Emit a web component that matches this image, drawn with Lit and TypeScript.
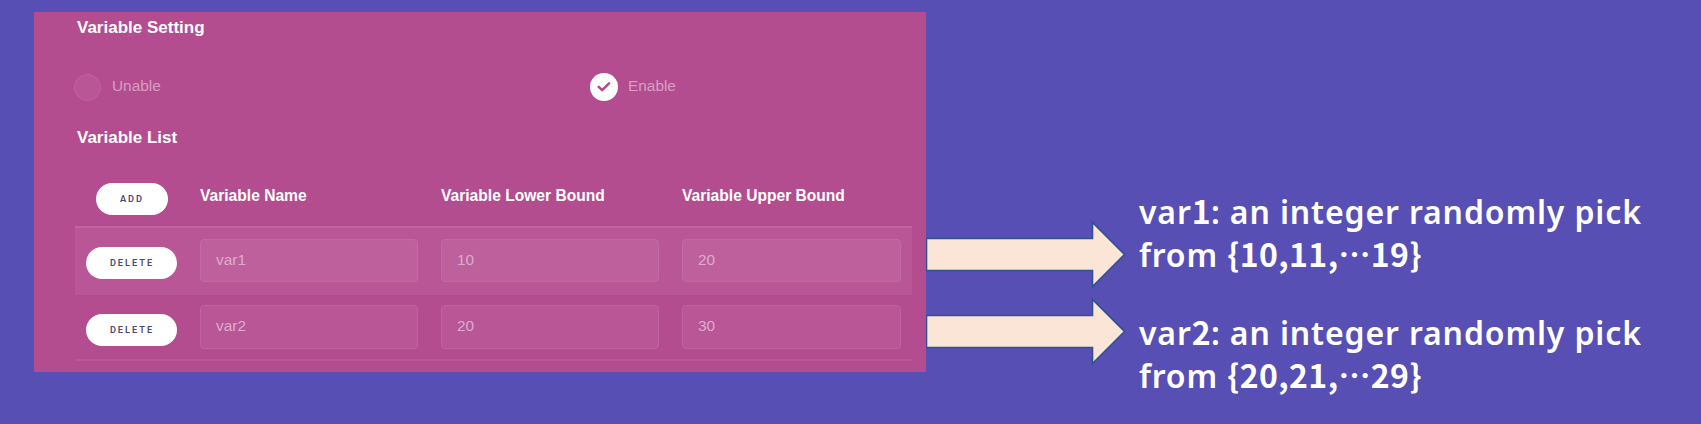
import { LitElement, html, css } from "lit";
import { customElement, property } from "lit/decorators.js";

interface Variable {
  name: string;
  lower: string;
  upper: string;
}

const VARIABLES: Variable[] = [
  { name: "var1", lower: "10", upper: "20" },
  { name: "var2", lower: "20", upper: "30" },
];

@customElement("variable-table")
class VariableTable extends LitElement {
  @property({ attribute: false }) rows: Variable[] = [];

  static styles = css`
    :host {
      display: block;
      width: 837px;
      font-family: "Liberation Sans", Arial, sans-serif;
    }
    .row {
      display: grid;
      grid-template-columns: 102px 218px 218px 219px;
      column-gap: 23px;
      box-sizing: border-box;
      height: 66px;
      padding-top: 11px;
      border-bottom: 2px solid #b95697;
    }
    .head {
      height: 61px;
      padding-top: 16px;
      border-bottom: 2px solid #bf66a2;
    }
    .odd {
      height: 67px;
      background: #b85696;
    }
    .action {
      display: flex;
      justify-content: center;
      align-items: flex-start;
      padding: 8px 0 0 11px;
    }
    .head .action {
      padding: 0 0 0 11px;
    }
    .btn {
      box-sizing: border-box;
      width: 91px;
      height: 32px;
      border: 0;
      border-radius: 16px;
      background: #fff;
      color: #51466f;
      font: 600 9.2px/30px Roboto, sans-serif;
      letter-spacing: 2px;
      padding: 0 0 1px 1px;
      text-align: center;
    }
    .add {
      width: 72px;
    }
    .title {
      color: #fff;
      font-weight: 700;
      font-size: 15.6px;
      line-height: 18px;
      padding-top: 4px;
      white-space: nowrap;
    }
    .field {
      box-sizing: border-box;
      width: 100%;
      height: 43px;
      border: 1px solid #c16ba5;
      border-radius: 4px;
      background: #bd609c;
      color: #dfabcd;
      font: 15.4px/20px "Liberation Sans", Arial, sans-serif;
      padding: 0 15px 2px;
    }
    .even .field {
      height: 44px;
      margin-top: -1px;
      background: #b85696;
      border-color: #be64a0;
    }
  `;

  render() {
    return html`
      <div class="row head">
        <div class="action"><button class="btn add">ADD</button></div>
        <div class="title">Variable Name</div>
        <div class="title">Variable Lower Bound</div>
        <div class="title">Variable Upper Bound</div>
      </div>
      ${this.rows.map(
        (v, i) => html`
          <div class="row ${i % 2 ? "even" : "odd"}">
            <div class="action"><button class="btn">DELETE</button></div>
            <div><input class="field" .value=${v.name} /></div>
            <div><input class="field" .value=${v.lower} /></div>
            <div><input class="field" .value=${v.upper} /></div>
          </div>
        `
      )}
    `;
  }
}

@customElement("block-arrow")
class BlockArrow extends LitElement {
  static styles = css`
    :host {
      display: block;
      height: 68px;
    }
    svg {
      display: block;
    }
  `;

  render() {
    return html`
      <svg width="200" height="68" viewBox="0 0 200 68">
        <path
          d="M0.5 18.5H166.5V2.5L198.5 34.5L166.5 66.5V50.5H0.5Z"
          fill="#fbe5d6"
          stroke="#2f528f"
          stroke-width="1.6"
        />
      </svg>
    `;
  }
}

@customElement("app-root")
class AppRoot extends LitElement {
  static styles = css`
    :host {
      display: flex;
      align-items: flex-start;
      box-sizing: border-box;
      width: 1701px;
      height: 424px;
      padding: 12px 0 0 34px;
      overflow: hidden;
      background: #584fb4;
      font-family: "Liberation Sans", Arial, sans-serif;
    }
    .panel {
      box-sizing: border-box;
      width: 892px;
      height: 360px;
      padding: 6px 0 0 40px;
      background: #b34d8f;
      flex: none;
    }
    .heading {
      margin: 0;
      padding-left: 3px;
      color: #fff;
      font-size: 17px;
      line-height: 20px;
      font-weight: 700;
    }
    .options {
      display: grid;
      grid-template-columns: 516px 1fr;
      align-items: center;
      height: 28px;
      margin: 35px 0 27px;
    }
    .option {
      display: flex;
      align-items: center;
      gap: 11px;
      color: #d99dc5;
      font-size: 15.4px;
      line-height: 18px;
    }
    .option span {
      padding-bottom: 2px;
    }
    .mark {
      box-sizing: border-box;
      width: 27px;
      height: 27px;
      border: 1px solid #be66a2;
      border-radius: 50%;
      background: #b85696;
    }
    .checked {
      display: grid;
      place-items: center;
      width: 28px;
      height: 28px;
      border: 0;
      background: #fff;
    }
    .checked + span {
      margin-left: -1px;
    }
    .table {
      margin: 19px 0 0 1px;
    }
    .arrows {
      display: flex;
      flex-direction: column;
      gap: 9px;
      width: 200px;
      padding-top: 208px;
      flex: none;
    }
    .notes {
      display: flex;
      flex-direction: column;
      gap: 35px;
      padding: 178px 0 0 13px;
      color: #fff;
      font: 600 32px/43px "Noto Sans", sans-serif;
      letter-spacing: 0.86px;
      white-space: nowrap;
    }
    .line {
      display: block;
      height: 43px;
    }
    .num {
      font-family: "Noto Sans CJK SC", sans-serif;
      font-weight: 700;
      line-height: 1px;
      letter-spacing: 0.4px;
    }
  `;

  render() {
    return html`
      <section class="panel">
        <h2 class="heading">Variable Setting</h2>
        <div class="options">
          <label class="option"><i class="mark"></i><span>Unable</span></label>
          <label class="option">
            <i class="mark checked">
              <svg width="14" height="12" viewBox="0 0 14 12">
                <path
                  d="M1.7 5.8L5.2 9.2L12 2.4"
                  fill="none"
                  stroke="#b04a8c"
                  stroke-width="2.5"
                  stroke-linecap="round"
                  stroke-linejoin="round"
                />
              </svg>
            </i>
            <span>Enable</span>
          </label>
        </div>
        <h2 class="heading">Variable List</h2>
        <variable-table class="table" .rows=${VARIABLES}></variable-table>
      </section>
      <div class="arrows">
        <block-arrow></block-arrow>
        <block-arrow></block-arrow>
      </div>
      <div class="notes" lang="zh-CN">
        <div>
          <span class="line">var<span class="num">1</span>: an integer randomly pick</span>
          <span class="line">from <span class="num">{10,11,…19}</span></span>
        </div>
        <div>
          <span class="line">var<span class="num">2</span>: an integer randomly pick</span>
          <span class="line">from <span class="num">{20,21,…29}</span></span>
        </div>
      </div>
    `;
  }
}
